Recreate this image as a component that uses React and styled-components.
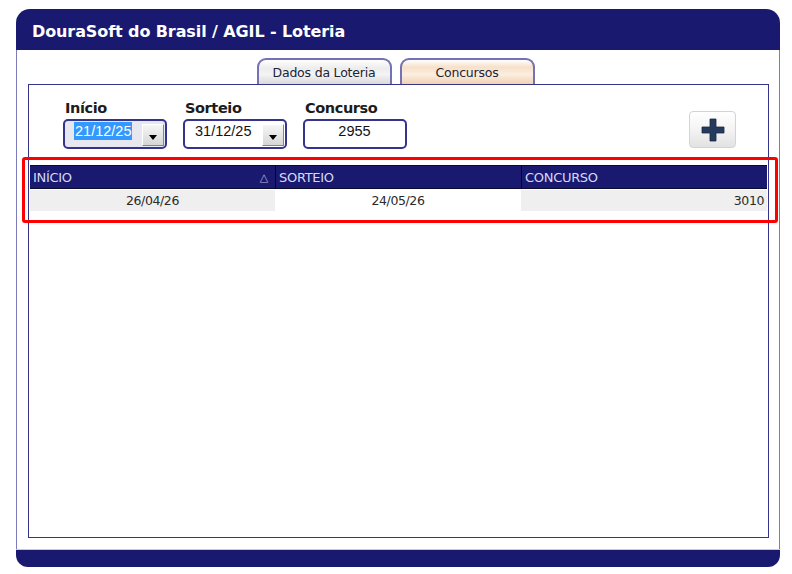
import React from "react";
import styled, { createGlobalStyle } from "styled-components";

const Global = createGlobalStyle`
  html, body { margin: 0; padding: 0; background: #ffffff; }
  body { font-family: "DejaVu Sans", Verdana, sans-serif; }
`;

const Page = styled.div`
  padding: 9px 0 0 16px;
`;

const Window = styled.div`
  width: 764px;
  height: 558px;
  display: flex;
  flex-direction: column;
  box-sizing: border-box;
`;

const TitleBar = styled.div`
  height: 41px;
  box-sizing: border-box;
  background: #191970;
  border-radius: 14px 14px 0 0;
  display: flex;
  align-items: center;
  padding: 4px 0 0 16px;
  color: #ffffff;
  font-family: "DejaVu Sans", Verdana, sans-serif;
  font-weight: bold;
  font-size: 16px;
  letter-spacing: -0.1px;
`;

const Body = styled.div`
  flex: 1;
  background: #ffffff;
  border-left: 1px solid #7c7cb8;
  border-right: 1px solid #7c7cb8;
  display: flex;
  flex-direction: column;
  padding: 8px 10px 11px 11px;
`;

const Footer = styled.div`
  height: 17px;
  background: #191970;
  border-radius: 0 0 12px 12px;
  border-top: 1px solid #c8c8e0;
`;

const TabRow = styled.div`
  display: flex;
  justify-content: center;
  gap: 8px;
  padding-right: 6px;
`;

const Tab = styled.div`
  width: 135px;
  height: 26px;
  box-sizing: border-box;
  border: 2px solid #7272b4;
  border-bottom: none;
  border-radius: 9px 9px 0 0;
  display: flex;
  align-items: center;
  justify-content: center;
  padding-top: 1px;
  font-size: 12.5px;
  letter-spacing: -0.2px;
  color: #222233;
  background: ${(p) =>
    p.$active
      ? "linear-gradient(#ffffff 0%, #f7e0c8 30%, #fbeee0 60%, #f1d2b2 100%)"
      : "linear-gradient(#ffffff 0%, #ececec 35%, #f4f4f4 60%, #d9d9d9 100%)"};
`;

const Panel = styled.div`
  flex: 1;
  border: 1px solid #34348c;
  display: flex;
  flex-direction: column;
  padding: 14px 1px 0 1px;
`;

const FormRow = styled.div`
  display: flex;
  align-items: flex-end;
  padding: 0 31px 0 33px;
  gap: 16px;
`;

const Field = styled.div`
  display: flex;
  flex-direction: column;
  gap: 2px;
`;

const Label = styled.div`
  font-family: "DejaVu Sans", Verdana, sans-serif;
  font-weight: bold;
  font-size: 14.5px;
  letter-spacing: -0.4px;
  line-height: 18px;
  color: #1c1c1c;
  padding-left: 2px;
`;

const InputBox = styled.div`
  width: 104px;
  height: 30px;
  box-sizing: border-box;
  border: 2px solid #34348c;
  border-radius: 5px;
  background: ${(p) => (p.$focused ? "#e7e7ef" : "#ffffff")};
  display: flex;
  align-items: center;
  justify-content: ${(p) => (p.$center ? "center" : "space-between")};
  padding: 0 1px 0 ${(p) => (p.$center ? "0" : "9px")};
  font-family: "Liberation Sans", Arial, sans-serif;
  font-size: 14.5px;
  color: #111111;
`;

const Value = styled.span`
  margin-top: -6px;
  line-height: 18px;
  padding: 0 1px;
  background: ${(p) => (p.$selected ? "#3399ff" : "transparent")};
  color: ${(p) => (p.$selected ? "#ffffff" : "#111111")};
`;

const DropButton = styled.div`
  width: 22px;
  height: 22px;
  box-sizing: border-box;
  margin-top: 2px;
  border-top: 1px solid #ffffff;
  border-left: 1px solid #ffffff;
  border-right: 1px solid #888888;
  border-bottom: 1px solid #888888;
  background: linear-gradient(#f6f6f6, #d6d6d6);
  display: flex;
  align-items: center;
  justify-content: center;
  padding-top: 4px;
`;

const Spacer = styled.div`
  flex: 1;
`;

const AddButton = styled.div`
  width: 47px;
  height: 37px;
  box-sizing: border-box;
  border: 1px solid #d4d4d4;
  border-radius: 4px;
  background: linear-gradient(#ffffff 0%, #f4f4f4 50%, #e2e2e2 100%);
  display: flex;
  align-items: center;
  justify-content: center;
  margin-bottom: 1px;
`;

const Grid = styled.div`
  position: relative;
  margin-top: 16px;
  &::after {
    content: "";
    position: absolute;
    left: -8px;
    top: -8px;
    right: -11px;
    bottom: -12px;
    border: 3px solid #ff0000;
    border-radius: 3px;
    pointer-events: none;
  }
`;

const Row = styled.div`
  display: grid;
  grid-template-columns: 245px 246px 1fr;
`;

const HeadCell = styled.div`
  height: 24px;
  box-sizing: border-box;
  background: #191970;
  border-top: 1px solid #0a0a30;
  border-bottom: 1px solid #0a0a30;
  border-left: ${(p) => (p.$first ? "none" : "1px solid #05051a")};
  display: flex;
  align-items: center;
  justify-content: space-between;
  padding: 1px 7px 0 3px;
  color: #d8d8f6;
  font-family: "DejaVu Sans", Verdana, sans-serif;
  font-size: 13px;
  letter-spacing: -0.3px;
`;

const SortMark = styled.span`
  color: #b8b8d8;
  font-size: 11px;
`;

const Cell = styled.div`
  height: 21px;
  margin-top: 1px;
  background: ${(p) => (p.$shade ? "#efefef" : "#ffffff")};
  display: flex;
  align-items: center;
  justify-content: ${(p) => p.$align || "center"};
  padding: 0 3px;
  color: #2a2a2a;
  font-family: "DejaVu Sans", Verdana, sans-serif;
  font-size: 12.5px;
  letter-spacing: -0.4px;
`;

const Arrow = () => (
  <svg width="8" height="5" viewBox="0 0 8 5">
    <polygon points="0,0 8,0 4,5" fill="#000" />
  </svg>
);

const Plus = () => (
  <svg width="26" height="26" viewBox="0 0 26 26">
    <path
      d="M10 2 H16 V10 H24 V16 H16 V24 H10 V16 H2 V10 H10 Z"
      fill="#253a5c"
      stroke="#1a2a46"
      strokeWidth="0.8"
      strokeLinejoin="round"
    />
  </svg>
);

export default function App() {
  return (
    <>
      <Global />
      <Page>
        <Window>
          <TitleBar>DouraSoft do Brasil / AGIL - Loteria</TitleBar>
          <Body>
            <TabRow>
              <Tab>Dados da Loteria</Tab>
              <Tab $active>Concursos</Tab>
            </TabRow>
            <Panel>
              <FormRow>
                <Field>
                  <Label>Início</Label>
                  <InputBox $focused>
                    <Value $selected>21/12/25</Value>
                    <DropButton>
                      <Arrow />
                    </DropButton>
                  </InputBox>
                </Field>
                <Field>
                  <Label>Sorteio</Label>
                  <InputBox>
                    <Value>31/12/25</Value>
                    <DropButton>
                      <Arrow />
                    </DropButton>
                  </InputBox>
                </Field>
                <Field>
                  <Label>Concurso</Label>
                  <InputBox $center>
                    <Value>2955</Value>
                  </InputBox>
                </Field>
                <Spacer />
                <AddButton>
                  <Plus />
                </AddButton>
              </FormRow>
              <Grid>
                <Row>
                  <HeadCell $first>
                    INÍCIO<SortMark>△</SortMark>
                  </HeadCell>
                  <HeadCell>SORTEIO</HeadCell>
                  <HeadCell>CONCURSO</HeadCell>
                </Row>
                <Row>
                  <Cell $shade>26/04/26</Cell>
                  <Cell>24/05/26</Cell>
                  <Cell $shade $align="flex-end">3010</Cell>
                </Row>
              </Grid>
            </Panel>
          </Body>
          <Footer />
        </Window>
      </Page>
    </>
  );
}
